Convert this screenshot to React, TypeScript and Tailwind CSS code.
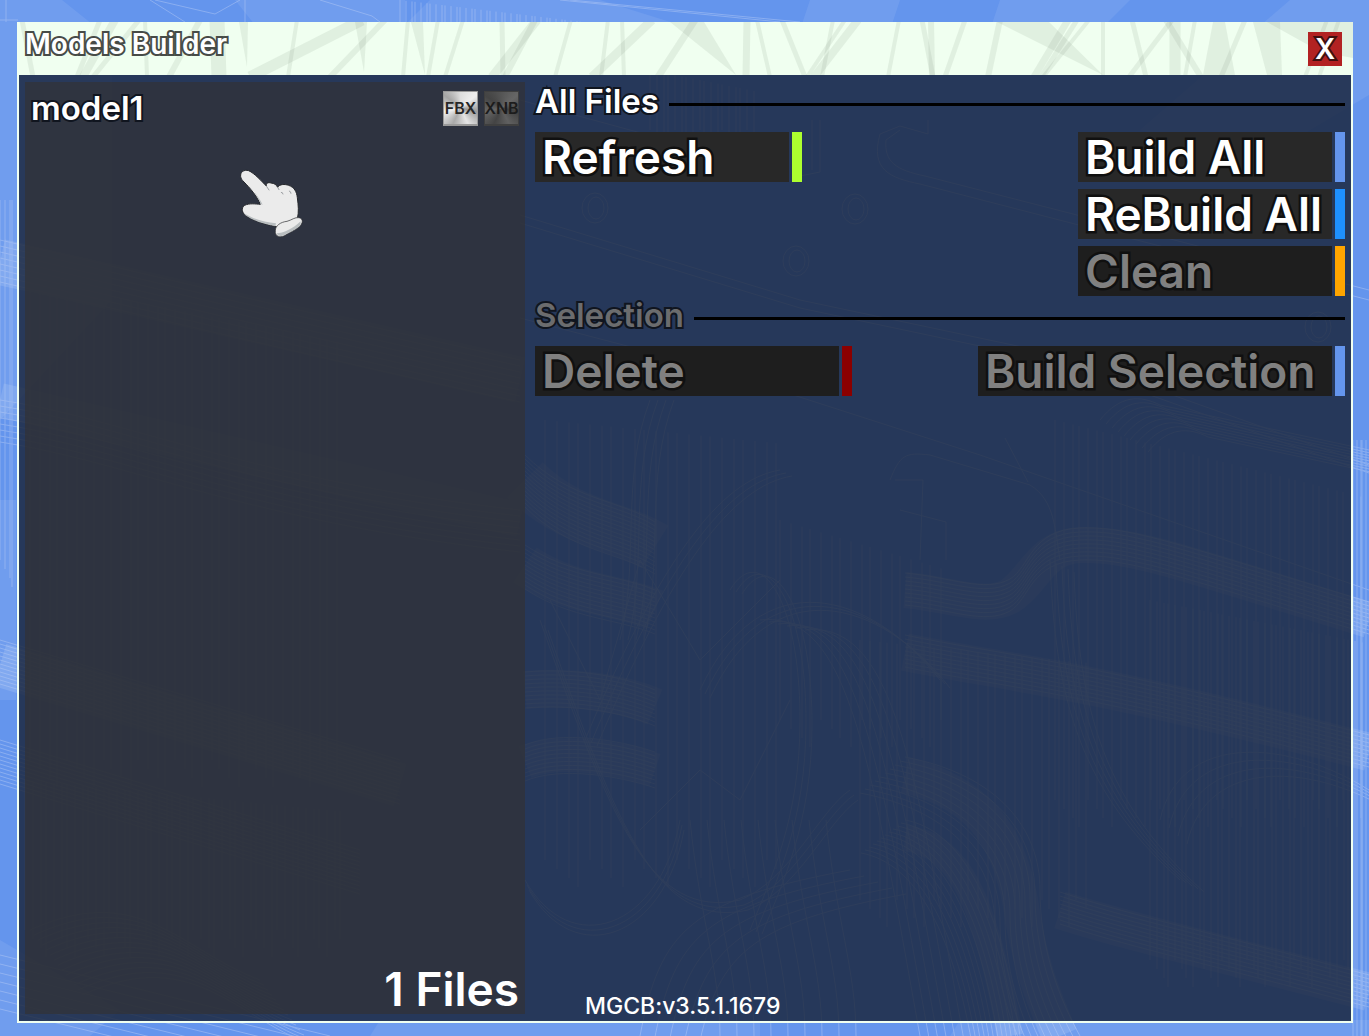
import type { ReactNode } from 'react';

// [top x, bottom x, stroke width]
const streaks: number[][] = [
    [5, 16, 5], [83, 60, 5], [98, 66, 8], [122, 76, 5], [128, 130, 4],
    [183, 152, 6], [200, 202, 15], [280, 271, 4], [345, 233, 11], [368, 313, 6],
    [391, 386, 4], [421, 411, 4], [446, 428, 4], [485, 486, 5], [518, 488, 6],
    [520, 475, 9], [554, 538, 4], [591, 584, 4], [605, 607, 4], [635, 575, 9],
    [678, 641, 7], [730, 729, 7], [740, 753, 4], [765, 788, 5], [816, 805, 4],
    [841, 797, 8], [828, 790, 4], [882, 871, 4], [905, 916, 5], [914, 915, 6],
    [948, 928, 5], [983, 971, 6], [1051, 1017, 7], [1060, 1024, 5], [1072, 1026, 4],
    [1086, 1086, 4], [1115, 1129, 5], [1155, 1112, 5], [1149, 1184, 6], [1158, 1158, 11],
    [1178, 1168, 4], [1228, 1204, 5], [1310, 1288, 4], [1322, 1302, 4],
];

const wedges = [
    '394,0 406,0 408,53',
    '653,0 687,0 719,53',
    '222,0 231,0 230,45',
    '338,0 350,0 347,50',
    '980,0 1032,0 1086,53',
    '1196,0 1208,0 1218,53 1186,53',
    '1236,0 1263,0 1265,53 1250,53',
    '1250,0 1336,0 1336,36 1304,30',
];

// curve, number of copies, dx, dy
const bundles: [string, number, number, number][] = [
    ['M525 455C570 500 620 500 655 522', 14, 0, 4],
    ['M525 545C570 575 620 575 655 590', 12, 0, 4],
    ['M525 672C570 668 620 675 655 690', 10, 0, 4],
    ['M525 745C560 730 620 740 655 752', 10, 0, 4],
    ['M905 573C950 577 985 593 1010 579C1030 567 1030 530 1080 528C1130 526 1180 545 1369 602', 9, 0, 4],
    ['M905 635C1000 655 1060 655 1369 735', 9, 0, 4],
    ['M1060 892C1130 915 1200 930 1369 975', 9, 0, 4],
    ['M905 757C1000 775 1040 830 1040 890C1040 950 1060 1000 1080 1036', 10, -5, 4],
    ['M905 820C960 830 1000 900 1020 1036', 12, -4, 3],
    ['M0 640L400 760', 12, 0, 4],
    ['M0 740L360 850', 12, 0, 4],
    ['M0 400C130 420 250 480 520 510', 8, 0, 6],
    ['M0 240C130 270 250 300 520 360', 8, 0, 6],
    ['M30 930C140 880 180 950 260 980', 14, 4, 5],
    ['M0 955L330 1036', 7, 0, 9],
    ['M700 690C760 560 870 590 940 680', 3, 5, 4],
    ['M585 740C660 560 720 480 780 470', 3, 6, 3],
    ['M540 620C610 820 650 920 740 900C790 880 820 810 850 790', 3, 4, 5],
    ['M640 1036C660 930 690 900 850 870', 5, 14, 6],
    ['M525 880C570 960 660 930 680 820', 3, 2, 5],
    ['M760 620C850 610 870 760 920 1036', 6, 9, 2],
    ['M1050 560C1055 700 1080 790 1180 880', 5, 6, 3],
    ['M620 640C640 560 620 480 650 400', 4, 8, 0],
    ['M720 1036C720 970 700 920 690 820', 9, 17, 0],
    ['M1160 820C1180 730 1290 740 1369 790', 4, 9, 8],
    ['M730 590C760 540 800 600 800 720C800 820 770 880 750 930', 3, 6, 2],
    ['M1100 420C1120 395 1140 395 1160 405L1369 450', 9, 6, 4],
];

// centre line and thickness of the pipes
const pipes: [string, number][] = [
    ['M905 590C950 594 985 610 1010 596C1035 580 1040 547 1080 545C1130 543 1180 562 1369 620', 36],
    ['M905 652C1000 672 1060 672 1369 752', 38],
    ['M1060 910C1130 932 1200 948 1369 992', 38],
    ['M905 775C990 795 1010 850 1020 900C1030 970 1045 1000 1060 1036', 36],
    ['M905 838C960 845 985 900 1010 1036', 26],
    ['M525 480C570 525 620 525 655 547', 50],
    ['M525 565C570 595 620 595 655 610', 42],
    ['M525 690C570 686 620 692 655 707', 38],
    ['M525 762C560 748 620 758 655 770', 34],
    ['M0 262C130 290 250 320 520 380', 46],
    ['M0 665L400 785', 44],
    ['M0 400L520 520', 34],
];

// x start, x end, y top, y bottom, step, slope
const hatches: number[][] = [
    [400, 640, 0, 30, 5, 0.12], [650, 760, 70, 130, 6, 0.2],
    [1055, 1369, 420, 800, 8, 0.25], [1150, 1369, 600, 960, 6, 0.2],
    [545, 790, 420, 860, 11, 0.1], [780, 950, 520, 720, 10, 0.3],
    [30, 350, 280, 760, 9, 0.2], [25, 350, 780, 930, 7, 0.1],
    [0, 18, 200, 560, 4, 0], [860, 1100, 640, 900, 9, 0.1],
    [1353, 1369, 440, 1036, 3, 0],
];

const bolts = [[595, 208], [855, 209], [796, 261], [1318, 327]];

function Wireframe() {
    return (
        <svg
            className="absolute inset-0 size-full"
            viewBox="0 0 1369 1036"
            preserveAspectRatio="xMidYMid slice"
            aria-hidden="true"
        >
            <g fill="#fff" opacity="0.08">
                <path d="M0 0H62L112 40V300L0 420Z" />
                <path d="M0 0H16V380H0ZM0 500H16V700H0Z" />
                <path d="M235 0L255 25H405L430 0ZM405 0H600L680 25H405Z" />
                <path d="M810 0H900L890 30H800ZM1000 0H1130L1100 30H990Z" />
                <path d="M1290 0H1369V95L1260 160L1140 130Z" />
                <path d="M0 940L120 1010L90 1036H0ZM380 1020H760V1036H370ZM960 1020H1369V1036H950Z" />
            </g>
            <g fill="none" stroke="#fff" opacity="0.12">
                {pipes.map(([d, width]) => (
                    <path key={d} d={d} strokeWidth={width} />
                ))}
            </g>
            <g fill="none" stroke="#b9cdf6" strokeWidth="1" opacity="0.45">
                {hatches.map(([x1, x2, top, bottom, step, slope], i) => (
                    <path
                        key={i}
                        d={Array.from({ length: Math.floor((x2 - x1) / step) }, (_, n) => {
                            const x = x1 + n * step + (n % 3);
                            const y = top + (x - x1) * slope;
                            return `M${x} ${y}V${bottom + (n % 4) * 9}`;
                        }).join('')}
                    />
                ))}
                {bundles.map(([d, count, dx, dy], i) =>
                    Array.from({ length: count }, (_, n) => (
                        <path key={`${i}-${n}`} d={d} transform={`translate(${n * dx} ${n * dy})`} />
                    )),
                )}
                {bolts.map(([x, y]) => (
                    <g key={x}>
                        <ellipse cx={x} cy={y} rx="13" ry="15" />
                        <ellipse cx={x + 1} cy={y} rx="8" ry="11" />
                    </g>
                ))}
                <path d="M520 215L800 300L1060 355L1369 465M520 223L800 308L1060 363L1369 473" />
                <path d="M520 318L700 365L980 455L1369 590M520 100L740 160" />
                <path d="M820 120V172L800 176M812 120V170M928 120V134L900 126L880 134C870 170 890 178 920 184L1369 300M900 130L886 140C884 162 896 170 925 176L1369 290" />
                <path d="M890 480C900 455 905 452 930 455L1030 485C1055 500 1055 530 1060 560M1005 438L1028 482" />
                <path d="M150 0L185 22M155 0L215 14L240 0M0 20H18M6 0V22M245 0V22M320 0L372 16L380 22M560 0L780 22M570 0L800 22" />
                <path d="M895 480H923L920 560M900 510L946 522V560M640 830L700 770L740 800L790 700M550 600L600 700L640 560L700 660L780 580" />
            </g>
        </svg>
    );
}

function TitlePattern() {
    return (
        <svg
            className="absolute inset-0 size-full"
            viewBox="0 0 1336 53"
            preserveAspectRatio="none"
            aria-hidden="true"
        >
            <g stroke="#5a6e5a" strokeOpacity="0.1">
                {streaks.map(([a, b, w], i) => (
                    <line key={i} x1={a} y1="-2" x2={b} y2="55" strokeWidth={w} />
                ))}
            </g>
            <g fill="#5a6e5a" fillOpacity="0.1">
                {wedges.map((points) => (
                    <polygon key={points} points={points} />
                ))}
            </g>
        </svg>
    );
}

function HandCursor() {
    return (
        <svg
            className="pointer-events-none absolute top-[168px] left-[238px] h-[70px] w-[66px]"
            viewBox="54 54 198 210"
            aria-hidden="true"
        >
            <g fill="#ebebeb" strokeLinejoin="round">
                <path
                    stroke="#25272b"
                    strokeWidth="3"
                    d="M62 80C60 66 72 58 86 62C104 70 125 94 139 108C137 100 144 96 153 99C163 100 169 104 173 112C179 102 194 102 206 106C223 112 230 125 232 143C235 166 237 185 232 207C218 223 195 231 170 230C140 224 105 214 82 200C65 190 62 174 74 166C88 159 107 162 121 163C112 139 88 112 72 96C66 90 63 86 62 80Z"
                />
                <path fill="#b9bec0" d="M72 190C98 206 132 216 168 220L166 228C132 223 100 212 82 199C76 196 73 193 72 190ZM84 104C100 122 116 140 128 164L122 162C114 140 100 120 84 104Z" />
                <path
                    stroke="#25272b"
                    strokeWidth="2"
                    d="M166 242C166 227 182 216 201 214C216 210 224 201 237 203C251 206 249 220 238 230C226 240 208 248 193 257C180 264 164 259 166 242Z"
                />
                <path fill="#b9bec0" d="M170 250C188 250 220 236 242 214C243 222 240 228 234 232C222 242 206 248 192 256C182 261 173 258 170 250Z" />
            </g>
            <path
                d="M139 108L147 120M173 112L177 119M184 127Q188 126 189 132M208 123Q213 124 213 130"
                fill="none"
                stroke="#9da1a4"
                strokeWidth="3"
                strokeLinecap="round"
            />
        </svg>
    );
}

function Section({ title, muted, children }: { title: string; muted?: boolean; children: ReactNode }) {
    return (
        <section>
            <div className="mb-[13px] flex h-[37px] items-center gap-2.5">
                <h2
                    className={`text-[33px] leading-9 font-semibold [paint-order:stroke_fill] [-webkit-text-stroke:4px_#10151f] ${
                        muted ? 'text-[#6b6c6e]' : 'text-white'
                    }`}
                >
                    {title}
                </h2>
                <div className="mt-2 h-[3px] flex-1 bg-black" />
            </div>
            <div className="flex items-start justify-between">{children}</div>
        </section>
    );
}

type ActionProps = { label: string; bar: string; width?: string; disabled?: boolean };

function Action({ label, bar, width = 'w-[267px]', disabled }: ActionProps) {
    return (
        <button type="button" disabled={disabled} className={`flex h-[50px] gap-[3px] text-left ${width}`}>
            <span
                className={`h-full flex-1 pl-[7px] text-[46px] leading-[50px] font-semibold whitespace-nowrap [paint-order:stroke_fill] [-webkit-text-stroke:5px_#101010] ${
                    disabled ? 'bg-[#1e1e1e] text-[#808080]' : 'bg-[#282828] text-white'
                }`}
            >
                {label}
            </span>
            <span className={`h-full w-2.5 ${bar}`} />
        </button>
    );
}

export default function App() {
    return (
        <div className="relative flex min-h-screen flex-col overflow-hidden bg-[#6495ed] pt-[22px] pr-4 pb-[13px] pl-[17px] font-['Inter',sans-serif]">
            <Wireframe />

            <div className="relative flex flex-1 flex-col">
                <header className="relative flex h-[53px] items-start justify-between bg-[#f0fff0] pr-[11px] pl-2">
                    <TitlePattern />
                    <h1 className="relative mt-1.5 text-[28px] leading-8 font-semibold text-white [paint-order:stroke_fill] [-webkit-text-stroke:4px_#474b47]">
                        Models Builder
                    </h1>
                    <button
                        type="button"
                        aria-label="Close"
                        className="relative mt-2.5 size-[34px] bg-[#b22222] text-[28px] leading-8 font-semibold text-white [paint-order:stroke_fill] [-webkit-text-stroke:4px_#401010]"
                    >
                        X
                    </button>
                </header>

                <main className="flex flex-1 gap-2.5 border-x-2 border-b-2 border-[#f0fff0] bg-[#162134]/80 px-1.5 py-[7px]">
                    <aside className="flex w-[500px] flex-col justify-between bg-[#323234]/70">
                        <ul>
                            <li className="flex items-center justify-between px-1.5 py-2">
                                <span className="text-[33px] leading-9 font-semibold text-white [paint-order:stroke_fill] [-webkit-text-stroke:4px_#10151f]">
                                    model1
                                </span>
                                <span className="flex gap-1.5 text-base font-semibold text-[#272727]">
                                    <span className="flex size-[35px] items-center justify-center border border-b-2 border-[#999] bg-[conic-gradient(#ddd,#eee,#999,#e5e5e5,#aaa,#f0f0f0,#a5a5a5,#ddd)]">
                                        FBX
                                    </span>
                                    <span className="flex size-[35px] items-center justify-center border border-b-2 border-[#3f3f3f] bg-[conic-gradient(#555,#666,#414141,#606060,#444,#666,#444,#555)] text-[#1c1c1c]">
                                        XNB
                                    </span>
                                </span>
                            </li>
                        </ul>
                        <p className="pr-1.5 text-right text-[46px] leading-[50px] font-semibold text-white">1 Files</p>
                    </aside>

                    <div className="flex flex-1 flex-col">
                        <Section title="All Files">
                            <Action label="Refresh" bar="bg-[#adff2f]" />
                            <div className="flex flex-col gap-[7px]">
                                <Action label="Build All" bar="bg-[#6495ed]" />
                                <Action label="ReBuild All" bar="bg-[#1e90ff]" />
                                <Action label="Clean" bar="bg-[#ffa500]" disabled />
                            </div>
                        </Section>
                        <Section title="Selection" muted>
                            <Action label="Delete" bar="bg-[#8b0000]" width="w-[317px]" disabled />
                            <Action label="Build Selection" bar="bg-[#6495ed]" width="w-[367px]" disabled />
                        </Section>
                        <p className="mt-auto pl-[50px] text-[23px] leading-4 font-medium text-white">
                            MGCB:v3.5.1.1679
                        </p>
                    </div>
                </main>
            </div>

            <HandCursor />
        </div>
    );
}
